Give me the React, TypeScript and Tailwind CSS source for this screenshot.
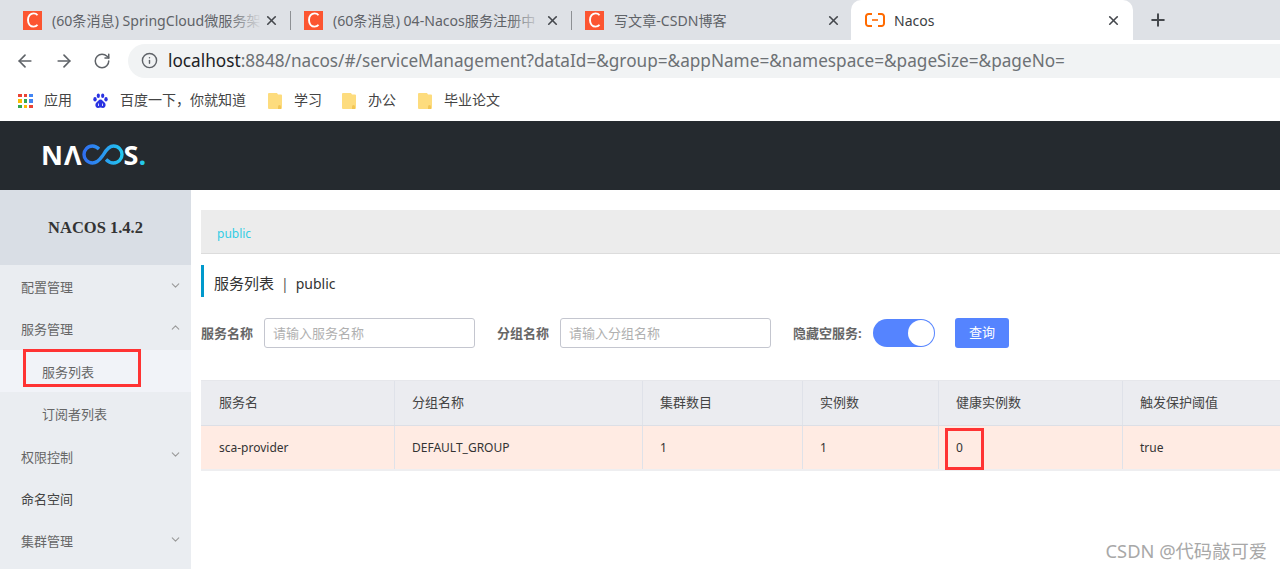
import React from 'react';
import { ArrowLeft, ArrowRight, RotateCw, Info, X, Plus, ChevronDown, ChevronUp } from 'lucide-react';

const CsdnIcon = () => (
  <div className="w-[19px] h-[19px] bg-[#fc5531] flex items-center justify-center shrink-0">
    <svg width="13" height="16" viewBox="0 0 13 16" fill="none">
      <path d="M11.5 3.2C10.6 2 9.2 1.4 7.6 1.4 4.4 1.4 2 4.1 2 8s2.4 6.6 5.6 6.6c1.6 0 3-.6 3.9-1.8" stroke="white" strokeWidth="1.9" />
    </svg>
  </div>
);

const Tab = ({ title, fade }: { title: string; fade?: boolean }) => (
  <div className="w-[281px] h-[40px] flex items-center pl-[13px] shrink-0 relative">
    <CsdnIcon />
    <div className="relative w-[211px] ml-[10px] overflow-hidden whitespace-nowrap text-[14.1px] text-[#5f6368] pt-[1px]">
      {title}
      {fade && <div className="absolute right-0 top-0 bottom-0 w-[34px] bg-gradient-to-r from-transparent to-[#dee1e6]" />}
    </div>
    <X size={15} strokeWidth={2.6} className="ml-[2px] text-[#45484d] shrink-0" />
    <div className="ml-[11px] w-px h-[19px] bg-[#8d9094] shrink-0" />
  </div>
);

const AliIcon = () => (
  <svg width="20" height="14" viewBox="0 0 20 14" className="shrink-0">
    <path d="M7 1H3.500A2.500 2.500 0 0 0 1 3.500v7A2.500 2.500 0 0 0 3.500 13H7M13 1h3.500A2.500 2.500 0 0 1 19 3.500v7a2.500 2.500 0 0 1-2.500 2.500H13" fill="none" stroke="#ff6a00" strokeWidth="2" />
    <path d="M7 7h6" stroke="#ff6a00" strokeWidth="1.6" />
  </svg>
);

const Folder = () => (
  <svg width="14" height="17" viewBox="0 0 14 17" className="shrink-0">
    <path d="M1 0h8l1 1.500h3a1 1 0 0 1 1 1V15a1 1 0 0 1-1 1H1a1 1 0 0 1-1-1V1a1 1 0 0 1 1-1z" fill="#fddc7e" />
    <path d="M10 16v-2.500a1.500 1.500 0 0 1 3 0V16z" fill="#f2c555" />
  </svg>
);

const AppsGrid = () => {
  const colors = ['#ea4335', '#ea4335', '#4285f4', '#fbbc05', '#34a853', '#4285f4', '#34a853', '#fbbc05', '#ea4335'];
  return (
    <div className="grid grid-cols-3 gap-[2px] w-[15px] shrink-0">
      {colors.map((c, i) => (
        <div key={i} className="w-[3.5px] h-[3.5px]" style={{ background: c }} />
      ))}
    </div>
  );
};

const BaiduIcon = () => (
  <svg width="15" height="16" viewBox="0 0 15 16" className="shrink-0" fill="#2932e1">
    <ellipse cx="2" cy="6.200" rx="1.700" ry="2.200" />
    <ellipse cx="5.300" cy="2.700" rx="1.600" ry="2.300" />
    <ellipse cx="9.700" cy="2.700" rx="1.600" ry="2.300" />
    <ellipse cx="13" cy="6.200" rx="1.700" ry="2.200" />
    <path d="M7.500 6.500c2 0 2.500 2 4 3 1.800 1.300 1.500 5.500-1.500 5.500-1 0-1.500-.4-2.500-.4s-1.500.4-2.500.4c-3 0-3.300-4.200-1.500-5.500 1.500-1 2-3 4-3z" />
    <path d="M5.500 10.500v2.500M9.500 10.500v2.500" stroke="#fff" strokeWidth="0.8" />
  </svg>
);

const Bookmark = ({ icon, label, width }: { icon: React.ReactNode; label: string; width: string }) => (
  <div className={`flex items-center ${width} shrink-0`}>{icon}<span className="-mt-[3px]">{label}</span></div>
);

const NacosLogo = () => (
  <div className="flex items-center h-[69px] pb-[2px] pl-[41px] text-white font-['Open_Sans','Noto_Sans',sans-serif] font-bold text-[27px] leading-none" aria-label="NACOS.">
    <span className="tracking-[1px]">NΛ</span>
    <svg width="42" height="21" viewBox="0 0 42 21" className="shrink-0 -ml-[1px]">
      <defs>
        <linearGradient id="inf" x1="0" y1="0" x2="1" y2="0">
          <stop offset="0" stopColor="#2f6ff0" />
          <stop offset="0.55" stopColor="#2a9cf0" />
          <stop offset="1" stopColor="#22c6f0" />
        </linearGradient>
      </defs>
      <path d="M17 5C15 3 13 2 10.500 2 5.500 2 2 6 2 10.500S5.500 19 10.500 19c6 0 9-6 11-8.500C23.500 7 26.500 2 31.500 2 36.500 2 40 6 40 10.500S36.500 19 31.500 19c-3 0-5.500-1.500-7.500-3.500" fill="none" stroke="url(#inf)" strokeWidth="3.400" />
    </svg>
    <span>S</span>
    <span className="text-[#25c8e8]">.</span>
  </div>
);

const MenuItem = ({ label, chevron, dark }: { label: string; chevron?: 'up' | 'down'; dark?: boolean }) => (
  <div className={`h-[42.4px] flex items-center pl-[21px] pr-[9px] justify-between ${dark ? 'text-[#444]' : 'text-[#666]'}`}>
    <span className="pt-[3px]">{label}</span>
    {chevron === 'down' && <ChevronDown size={13} className="text-[#9a9a9a] -mt-[2px]" />}
    {chevron === 'up' && <ChevronUp size={13} className="text-[#9a9a9a] -mt-[2px]" />}
  </div>
);

const columns = [
  { title: '服务名', value: 'sca-provider', width: 'w-[194px]' },
  { title: '分组名称', value: 'DEFAULT_GROUP', width: 'w-[248px]' },
  { title: '集群数目', value: '1', width: 'w-[160px]' },
  { title: '实例数', value: '1', width: 'w-[136px]' },
  { title: '健康实例数', value: '0', width: 'w-[184px]' },
  { title: '触发保护阈值', value: 'true', width: 'w-[157px]' },
];

const App: React.FC = () => {
  return (
    <div className="w-[1280px] h-[569px] overflow-hidden bg-white font-['Noto_Sans','Noto_Sans_CJK_SC',sans-serif] flex flex-col">
      {/* browser tabs */}
      <div className="h-[40px] bg-[#dee1e6] flex pl-[10px] shrink-0">
        <Tab title="(60条消息) SpringCloud微服务架" fade />
        <Tab title="(60条消息) 04-Nacos服务注册中" fade />
        <Tab title="写文章-CSDN博客" />
        <div className="w-[282px] -ml-[2px] h-[40px] bg-white rounded-t-[10px] flex items-center pl-[14px] shrink-0 relative z-10">
          <AliIcon />
          <span className="ml-[9px] w-[212px] text-[14px] text-[#3c4043] pt-[1px]">Nacos</span>
          <X size={15} strokeWidth={2.6} className="text-[#45484d]" />
        </div>
        <Plus size={20} strokeWidth={2.4} className="ml-[15px] mt-[10px] text-[#45484d]" />
      </div>
      {/* address bar */}
      <div className="h-[41px] flex items-center pl-[15px] shrink-0">
        <ArrowLeft size={20} className="text-[#5f6368]" />
        <ArrowRight size={20} className="text-[#5f6368] ml-[19px]" />
        <RotateCw size={18} className="text-[#5f6368] ml-[19px]" />
        <div className="ml-[17px] flex-1 h-[34px] bg-[#f1f3f4] rounded-l-full flex items-center pl-[13px] text-[17.2px] whitespace-nowrap">
          <Info size={17} className="text-[#5f6368] mr-[10px]" />
          <span className="text-[#202124]">localhost</span>
          <span className="text-[#6d7175]">:8848/nacos/#/serviceManagement?dataId=&amp;group=&amp;appName=&amp;namespace=&amp;pageSize=&amp;pageNo=</span>
        </div>
      </div>
      {/* bookmarks */}
      <div className="h-[40px] flex items-center pl-[18px] text-[14px] text-[#444] shrink-0">
        <Bookmark icon={<AppsGrid />} label="应用" width="w-[75px] gap-[11px]" />
        <Bookmark icon={<BaiduIcon />} label="百度一下，你就知道" width="w-[175px] gap-[12px]" />
        <Bookmark icon={<Folder />} label="学习" width="w-[74px] gap-[12px]" />
        <Bookmark icon={<Folder />} label="办公" width="w-[76px] gap-[12px]" />
        <Bookmark icon={<Folder />} label="毕业论文" width="w-[90px] gap-[12px]" />
      </div>
      {/* nacos header */}
      <div className="h-[69px] bg-[#252a2f] shrink-0">
        <NacosLogo />
      </div>
      <div className="flex-1 flex min-h-0">
        {/* sidebar */}
        <div className="w-[191px] bg-[#eaedf1] shrink-0 text-[13px]">
          <div className="h-[75px] bg-[#d9dee5] flex items-center justify-center pt-[2px] font-['Liberation_Serif',serif] font-bold text-[16.5px] text-[#333]">
            NACOS 1.4.2
          </div>
          <MenuItem label="配置管理" chevron="down" />
          <MenuItem label="服务管理" chevron="up" />
          <div className="h-[42.4px] flex items-center pl-[42px] bg-[#f1f3f8] text-[#666] relative">
            <span className="pt-[3px]">服务列表</span>
            <div className="absolute left-[23px] -top-[1px] w-[118px] h-[38px] border-[3px] border-[#ff3333]" />
          </div>
          <div className="h-[42.4px] flex items-center pl-[42px] text-[#666]"><span className="pt-[3px]">订阅者列表</span></div>
          <MenuItem label="权限控制" chevron="down" />
          <MenuItem label="命名空间" dark />
          <MenuItem label="集群管理" chevron="down" />
        </div>
        {/* main */}
        <div className="flex-1 min-w-0 pl-[10px] pt-[20px] relative">
          <div className="h-[44px] bg-[#ececec] border-b border-[#dcdcdc] flex items-center pl-[16px] pt-[5px] text-[12px] text-[#33cde5]">
            public
          </div>
          <div className="mt-[11px] h-[32px] border-l-[3px] border-[#09c] flex items-center pl-[10px] pt-[5px] text-[14px] text-[#333]">
            <span className="text-[15px]">服务列表</span>
            <span className="mx-[7px] text-[#555]">|</span>
            <span>public</span>
          </div>
          <div className="mt-[21px] flex items-center h-[30px] text-[13px]">
            <span className="font-bold text-[#666] w-[63px] pt-[1px]">服务名称</span>
            <div className="w-[211px] h-[30px] border border-[#c4c6cf] rounded-[3px] flex items-center pl-[8px] pt-[1px] text-[#b0b0b0]">请输入服务名称</div>
            <span className="ml-[22px] font-bold text-[#666] w-[63px] pt-[1px]">分组名称</span>
            <div className="w-[211px] h-[30px] border border-[#c4c6cf] rounded-[3px] flex items-center pl-[8px] pt-[1px] text-[#b0b0b0]">请输入分组名称</div>
            <span className="ml-[22px] font-bold text-[#666] w-[80px] whitespace-nowrap pt-[1px]">隐藏空服务:</span>
            <div className="w-[62px] h-[28px] rounded-full bg-[#5584ff] flex items-center justify-end pr-[1px]">
              <div className="w-[26px] h-[26px] rounded-full bg-white" />
            </div>
            <div className="ml-[20px] w-[54px] h-[30px] bg-[#5584ff] rounded-[3px] flex items-center justify-center text-white">查询</div>
          </div>
          {/* table */}
          <div className="mt-[32px] w-[1079px] text-[13px] border-t border-[#e6e7eb]">
            <div className="flex h-[45px] bg-[#ebecf0] border-b border-[#dcdfe6] text-[#444]">
              {columns.map((c, i) => (
                <div key={c.title} className={`${i === 0 ? 'w-[193px] pl-[18px]' : `${c.width} pl-[17px] border-l border-[#dfe2e9]`} shrink-0 flex items-center`}>{c.title}</div>
              ))}
            </div>
            <div className="flex h-[45px] bg-[#ffebe3] border-b-2 border-[#eeeef0] text-[#333] text-[12px]">
              {columns.map((c, i) => (
                <div key={c.title} className={`${i === 0 ? 'w-[193px] pl-[18px]' : `${c.width} pl-[17px] border-l border-[#dfe2e9]`} shrink-0 flex items-center`}>{c.value}</div>
              ))}
            </div>
          </div>
          <div className="absolute left-[754px] top-[238px] w-[39px] h-[42px] border-[3px] border-[#ff3333]" />
          <div className="absolute right-[13px] bottom-[9px] text-[18.3px] text-[#a8a8a8] leading-none whitespace-nowrap">CSDN @代码敲可爱</div>
        </div>
      </div>
    </div>
  );
};

export default App;
